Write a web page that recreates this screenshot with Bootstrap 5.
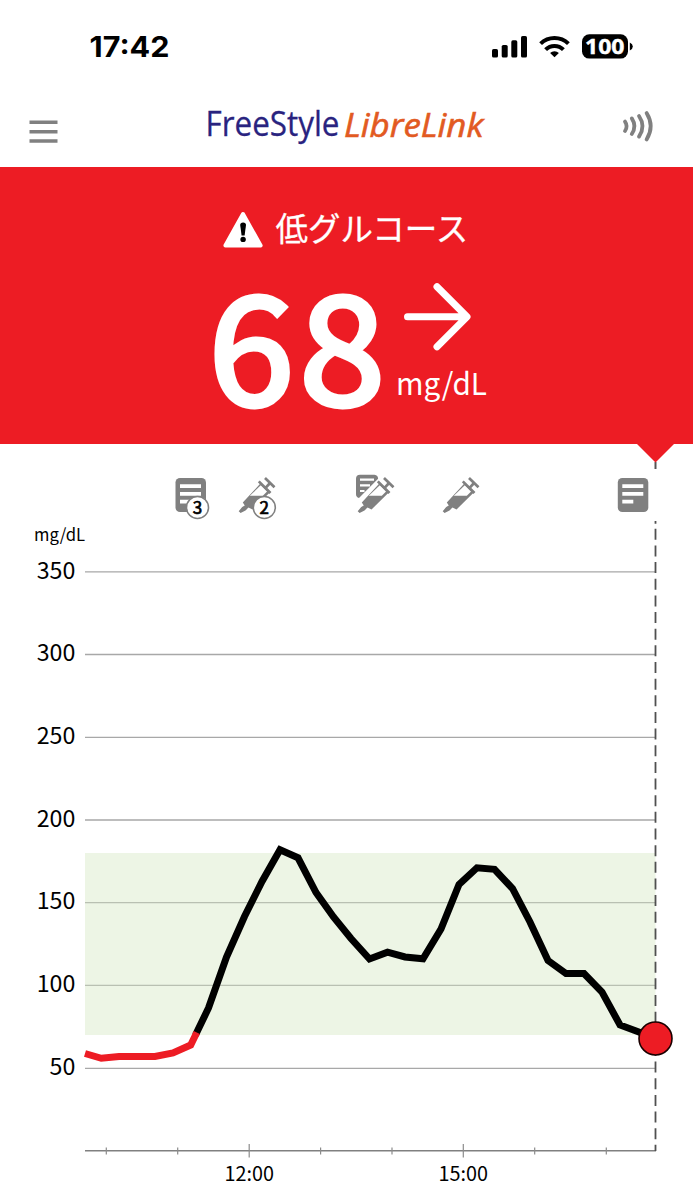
<!DOCTYPE html>
<html lang="ja">
<head>
<meta charset="utf-8">
<meta name="viewport" content="width=device-width, initial-scale=1">
<title>FreeStyle LibreLink</title>
<link href="https://cdn.jsdelivr.net/npm/bootstrap@5.3.0/dist/css/bootstrap.min.css" rel="stylesheet">
<style>
:root { --alert: #ed1c24; }
body { font-family: "Noto Sans CJK JP", sans-serif; color: #000; }
svg { display: block; flex: none; overflow: visible; }
.screen { width: 693px; height: 1200px; overflow: hidden; background: #fff; }
.status-bar { height: 95px; }
.status-bar text { font-family: Inter, sans-serif; font-weight: 700; }
.status-bar .charge { font-family: "Open Sans", sans-serif; }
.app-header { height: 72px; }
.brand text { font-family: "Open Sans", "Noto Sans", sans-serif; }
.alert-panel { height: 277px; background: var(--alert); }
.notch { top: 100%; left: 637px; }
.reading { font-size: 146.5px; letter-spacing: 5.4px; }
.notes { height: 77px; }
.chart text { font-size: 23.2px; }
.chart .unit { font-size: 17.3px; }
.chart .hour { font-size: 19.8px; }
.badge-count { font-size: 17px; }
</style>
</head>
<body>
<main class="screen position-relative d-flex flex-column">
  <div class="status-bar">
    <svg width="693" height="95" viewBox="0 0 693 95">
      <text x="89.5" y="57.2" font-size="28.5" textLength="80" lengthAdjust="spacingAndGlyphs">17:42</text>
      <rect x="492" y="49" width="6" height="8.5" rx="1.6"/>
      <rect x="501.7" y="45" width="6" height="12.5" rx="1.6"/>
      <rect x="511.3" y="40.3" width="6" height="17.2" rx="1.6"/>
      <rect x="521" y="36" width="6" height="21.5" rx="1.6"/>
      <g fill="none" stroke="#000" stroke-width="4">
        <path d="M540.6 43.6a20 20 0 0 1 27.8 0"/>
        <path d="M545.6 49.6a12.6 12.6 0 0 1 17.8 0"/>
      </g>
      <path d="M554.5 57.3l-4.4-4.4a6.4 6.4 0 0 1 8.800 0z"/>
      <rect x="582" y="34.3" width="46" height="24.3" rx="7.4"/>
      <path d="M629.8 42.6q3 1.300 3 3.900t-3 3.900z"/>
      <text class="charge" x="604.8" y="54.200" font-size="21" fill="#fff" stroke="#fff" stroke-width=".4" text-anchor="middle" textLength="39.500" lengthAdjust="spacingAndGlyphs">100</text>
    </svg>
  </div>
  <header class="app-header d-flex">
    <svg class="brand" width="693" height="72" viewBox="0 95 693 72">
      <path d="M29.5 122.300h28M29.5 131.800h28M29.5 141h28" stroke="#808080" stroke-width="3.600"/>
      <text x="205.500" y="136.200" font-size="34.800" fill="#29237f" stroke="#29237f" stroke-width=".3" textLength="134" lengthAdjust="spacingAndGlyphs">FreeStyle</text>
      <text x="344" y="136.700" font-size="33.500" font-style="italic" fill="#e25a22" stroke="#e25a22" stroke-width=".6" textLength="139.500" lengthAdjust="spacingAndGlyphs">LibreLink</text>
      <g fill="none" stroke="#808080" stroke-width="3.800" stroke-linecap="round">
        <path d="M625 121.600q3.200 4.700 0 9.400"/>
        <path d="M631.800 118.400q5.200 7.800 0 15.600"/>
        <path d="M639 116q7 10.300 0 20.600"/>
        <path d="M646.600 113q8.200 13.200 0 26.400"/>
      </g>
    </svg>
  </header>
  <section class="alert-panel position-relative">
    <svg width="693" height="277" viewBox="0 167 693 277" fill="#fff">
      <path d="M243 214l17.600 31.500h-35.200z" stroke="#fff" stroke-width="4" stroke-linejoin="round"/>
      <path d="M240.200 225q0-2.600 2.900-2.600t2.900 2.600l-1.400 10.400h-3z" fill="#000"/>
      <circle cx="243.100" cy="239.400" r="2.700" fill="#000"/>
      <text x="275.500" y="241" font-size="32.500" stroke="#fff" stroke-width=".3">低グルコース</text>
      <text class="reading" transform="translate(208.500 405.300) scale(1.05 1)" stroke="#fff" stroke-width="5">68</text>
      <path d="M407.500 316.700h59M437 286.700l30 30-30 30" fill="none" stroke="#fff" stroke-width="7" stroke-linecap="round" stroke-linejoin="round"/>
      <text x="396" y="394.500" font-size="30.500" textLength="91" lengthAdjust="spacingAndGlyphs">mg/dL</text>
    </svg>
    <svg class="notch position-absolute" width="38" height="19" viewBox="0 0 38 19"><path d="M0 0h37L18.500 18.500z" fill="#ed1c24"/></svg>
  </section>
  <div class="notes">
    <svg width="693" height="77" viewBox="0 444 693 77">
      <defs>
        <g id="note">
          <rect width="30.500" height="34" rx="4.500" fill="#808080"/>
          <path d="M4.500 8.200h21M4.500 15.900h21M4.500 23.600h11" stroke="#fff" stroke-width="3.800"/>
        </g>
        <g id="syringe">
          <path d="M-.3 33.200l3.500-4.200 2.600-1.600-2-2.800L21.800 5 31 14.200 13.500 31.500 9.500 29.600 6.500 32.400 1.600 35z" fill="#808080"/>
          <path d="M10.800 17.800L21.800 7.300l6.300 6.200-4.300 4.300z" fill="#fff"/>
          <path d="M19.800 3.400L31.500 15M26 0L35.500 9.300M27.300 9.200L31 5" stroke="#808080" stroke-width="2.700" fill="none"/>
        </g>
      </defs>
      <path d="M655.500 462v7" stroke="#555" stroke-width="2"/>
      <use href="#note" x="175.500" y="478"/>
      <use href="#syringe" x="239" y="478"/>
      <g class="badge-count" text-anchor="middle" stroke-width=".7">
        <circle cx="197.500" cy="507.500" r="11" fill="#fff" stroke="#808080" stroke-width="1.600"/>
        <text x="197.500" y="513.800" stroke="#000">3</text>
        <circle cx="264.300" cy="507.500" r="11" fill="#fff" stroke="#808080" stroke-width="1.600"/>
        <text x="264.300" y="513.800" stroke="#000">2</text>
      </g>
      <path d="M360 474.800h14.500a4 4 0 0 1 3.600 4L359 498a4 4 0 0 1-3-4v-15.200a4 4 0 0 1 4-4z" fill="#808080"/>
      <path d="M360 479.600h14M360 485.300h10M360 491h4.500" stroke="#fff" stroke-width="2.200"/>
      <use href="#syringe" x="358" y="478"/>
      <use href="#syringe" x="443" y="478"/>
      <use href="#note" x="617.800" y="478"/>
    </svg>
  </div>
  <section class="chart">
    <svg width="693" height="679" viewBox="0 521 693 679">
      <rect x="85" y="853" width="570.500" height="182" fill="#edf5e5"/>
      <path d="M85 571.800h571M85 654.500h571M85 737.300h571M85 820h571M85 1068.300h571" stroke="#a8a8a8" stroke-width="1.300"/>
      <path d="M85 902.600h571M85 985.400h571" stroke="#b9c0b2" stroke-width="1.300"/>
      <path d="M85 1150.700h571" stroke="#808080" stroke-width="1.400"/>
      <path d="M106.300 1147.500v7M177.700 1147.500v7M320.600 1147.500v7M392 1147.500v7M534.700 1147.500v7M606.300 1147.500v7M249.200 1144v13.500M463.300 1144v13.500" stroke="#8c8c8c" stroke-width="1.200"/>
      <path d="M655.500 521v2.700M655.500 528.800V1151" stroke="#505050" stroke-width="1.800" stroke-dasharray="11 5.650"/>
      <text class="unit" x="34" y="540.800" textLength="51" lengthAdjust="spacingAndGlyphs">mg/dL</text>
      <g text-anchor="end">
        <text x="75.300" y="578.500">350</text>
        <text x="75.300" y="661.200">300</text>
        <text x="75.300" y="743.800">250</text>
        <text x="75.300" y="826.500">200</text>
        <text x="75.300" y="909.200">150</text>
        <text x="75.300" y="991.900">100</text>
        <text x="75.300" y="1074.600">50</text>
      </g>
      <g text-anchor="middle">
        <text class="hour" x="249.200" y="1180.600">12:00</text>
        <text class="hour" x="463.300" y="1180.600">15:00</text>
      </g>
      <g fill="none" stroke-width="7">
        <path d="M195.500 1035L208.500 1008 226.500 957 244.500 916.500 262 881.500 280 849.800 298 857.800 316 892.500 333.500 917 351 938.500 369.500 959 387.500 952.200 405 957 423 958.700 441 929 459 884.500 477 867.800 494.500 869.300 512.500 888.500 530 922 548 960.500 566 973.500 584 973.500 602 992 620 1025 655 1038" stroke="#000"/>
        <path d="M85 1053.500L101.300 1058.300 119 1056.600 155 1056.500 173 1053 190.700 1045 196.800 1032.500" stroke="#ed1c24"/>
      </g>
      <circle cx="655.500" cy="1038.500" r="16.500" fill="#ed1c24" stroke="#1a0000" stroke-width="1.600"/>
    </svg>
  </section>
</main>
<script src="https://cdn.jsdelivr.net/npm/bootstrap@5.3.0/dist/js/bootstrap.bundle.min.js"></script>
</body>
</html>
